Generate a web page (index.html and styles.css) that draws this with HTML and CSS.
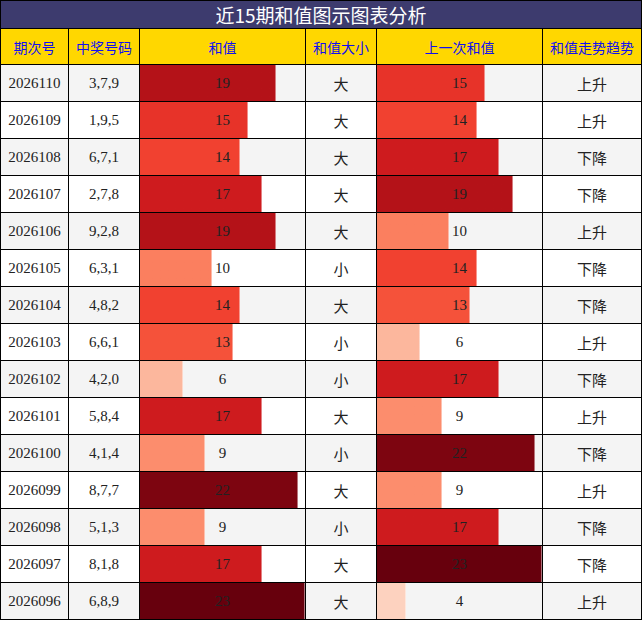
FILE: index.html
```html
<!DOCTYPE html>
<html lang="zh-CN">
<head>
<meta charset="utf-8">
<title>近15期和值图示图表分析</title>
<link rel="stylesheet" href="styles.css">
</head>
<body>
<div class="board">
  <div class="title">近15期和值图示图表分析</div>
  <div class="row head">
    <div class="cell">期次号</div>
    <div class="cell">中奖号码</div>
    <div class="cell">和值</div>
    <div class="cell">和值大小</div>
    <div class="cell">上一次和值</div>
    <div class="cell">和值走势趋势</div>
  </div>
  <div class="row alt">
    <div class="cell num">2026110</div><div class="cell num">3,7,9</div>
    <div class="cell num bar" style="--w:82.61%;--c:#b41218">19</div>
    <div class="cell cjk">大</div>
    <div class="cell num bar" style="--w:65.22%;--c:#e73329">15</div>
    <div class="cell cjk">上升</div>
  </div>
  <div class="row">
    <div class="cell num">2026109</div><div class="cell num">1,9,5</div>
    <div class="cell num bar" style="--w:65.22%;--c:#e73329">15</div>
    <div class="cell cjk">大</div>
    <div class="cell num bar" style="--w:60.87%;--c:#f14130">14</div>
    <div class="cell cjk">上升</div>
  </div>
  <div class="row alt">
    <div class="cell num">2026108</div><div class="cell num">6,7,1</div>
    <div class="cell num bar" style="--w:60.87%;--c:#f14130">14</div>
    <div class="cell cjk">大</div>
    <div class="cell num bar" style="--w:73.91%;--c:#ce1b1e">17</div>
    <div class="cell cjk">下降</div>
  </div>
  <div class="row">
    <div class="cell num">2026107</div><div class="cell num">2,7,8</div>
    <div class="cell num bar" style="--w:73.91%;--c:#ce1b1e">17</div>
    <div class="cell cjk">大</div>
    <div class="cell num bar" style="--w:82.61%;--c:#b41218">19</div>
    <div class="cell cjk">下降</div>
  </div>
  <div class="row alt">
    <div class="cell num">2026106</div><div class="cell num">9,2,8</div>
    <div class="cell num bar" style="--w:82.61%;--c:#b41218">19</div>
    <div class="cell cjk">大</div>
    <div class="cell num bar" style="--w:43.48%;--c:#fb7f5f">10</div>
    <div class="cell cjk">上升</div>
  </div>
  <div class="row">
    <div class="cell num">2026105</div><div class="cell num">6,3,1</div>
    <div class="cell num bar" style="--w:43.48%;--c:#fb7f5f">10</div>
    <div class="cell cjk">小</div>
    <div class="cell num bar" style="--w:60.87%;--c:#f14130">14</div>
    <div class="cell cjk">下降</div>
  </div>
  <div class="row alt">
    <div class="cell num">2026104</div><div class="cell num">4,8,2</div>
    <div class="cell num bar" style="--w:60.87%;--c:#f14130">14</div>
    <div class="cell cjk">大</div>
    <div class="cell num bar" style="--w:56.52%;--c:#f5523a">13</div>
    <div class="cell cjk">下降</div>
  </div>
  <div class="row">
    <div class="cell num">2026103</div><div class="cell num">6,6,1</div>
    <div class="cell num bar" style="--w:56.52%;--c:#f5523a">13</div>
    <div class="cell cjk">小</div>
    <div class="cell num bar" style="--w:26.09%;--c:#fcb79d">6</div>
    <div class="cell cjk">上升</div>
  </div>
  <div class="row alt">
    <div class="cell num">2026102</div><div class="cell num">4,2,0</div>
    <div class="cell num bar" style="--w:26.09%;--c:#fcb79d">6</div>
    <div class="cell cjk">小</div>
    <div class="cell num bar" style="--w:73.91%;--c:#ce1b1e">17</div>
    <div class="cell cjk">下降</div>
  </div>
  <div class="row">
    <div class="cell num">2026101</div><div class="cell num">5,8,4</div>
    <div class="cell num bar" style="--w:73.91%;--c:#ce1b1e">17</div>
    <div class="cell cjk">大</div>
    <div class="cell num bar" style="--w:39.13%;--c:#fc8d6d">9</div>
    <div class="cell cjk">上升</div>
  </div>
  <div class="row alt">
    <div class="cell num">2026100</div><div class="cell num">4,1,4</div>
    <div class="cell num bar" style="--w:39.13%;--c:#fc8d6d">9</div>
    <div class="cell cjk">小</div>
    <div class="cell num bar" style="--w:95.65%;--c:#7d0510">22</div>
    <div class="cell cjk">下降</div>
  </div>
  <div class="row">
    <div class="cell num">2026099</div><div class="cell num">8,7,7</div>
    <div class="cell num bar" style="--w:95.65%;--c:#7d0510">22</div>
    <div class="cell cjk">大</div>
    <div class="cell num bar" style="--w:39.13%;--c:#fc8d6d">9</div>
    <div class="cell cjk">上升</div>
  </div>
  <div class="row alt">
    <div class="cell num">2026098</div><div class="cell num">5,1,3</div>
    <div class="cell num bar" style="--w:39.13%;--c:#fc8d6d">9</div>
    <div class="cell cjk">小</div>
    <div class="cell num bar" style="--w:73.91%;--c:#ce1b1e">17</div>
    <div class="cell cjk">下降</div>
  </div>
  <div class="row">
    <div class="cell num">2026097</div><div class="cell num">8,1,8</div>
    <div class="cell num bar" style="--w:73.91%;--c:#ce1b1e">17</div>
    <div class="cell cjk">大</div>
    <div class="cell num bar" style="--w:100%;--c:#67000d">23</div>
    <div class="cell cjk">下降</div>
  </div>
  <div class="row alt">
    <div class="cell num">2026096</div><div class="cell num">6,8,9</div>
    <div class="cell num bar" style="--w:100%;--c:#67000d">23</div>
    <div class="cell cjk">大</div>
    <div class="cell num bar" style="--w:17.39%;--c:#fdd2bf">4</div>
    <div class="cell cjk">上升</div>
  </div>
</div>
</body>
</html>
```
FILE: styles.css
```css
html, body {
  margin: 0;
  padding: 0;
  background: #ffffff;
}

.board {
  width: 642px;
  box-sizing: border-box;
  padding: 1px;
  background: #000000;
  display: grid;
  grid-template-columns: 67px 70px 165px 70px 165px 98px;
  grid-template-rows: 27px 35px repeat(15, 36px);
  gap: 1px;
}

.title {
  grid-column: 1 / -1;
  background: #3d3b6e;
  color: #ffffff;
  font-family: "Noto Sans CJK SC", "Noto Sans", sans-serif;
  font-size: 19px;
  line-height: 27px;
  text-align: center;
}

.row {
  display: contents;
}

.cell {
  display: flex;
  align-items: center;
  justify-content: center;
  background-color: #ffffff;
  color: #222222;
  white-space: nowrap;
}

.row.alt .cell {
  background-color: #f4f4f4;
}

.row.head .cell {
  background-color: #ffd700;
  color: #1010f0;
  font-family: "Noto Sans CJK SC", sans-serif;
  font-size: 14px;
}

.num {
  font-family: "Liberation Serif", "Noto Sans CJK SC", serif;
  font-size: 15px;
}

.cjk {
  font-family: "Noto Sans CJK SC", sans-serif;
  font-size: 15px;
}

.bar {
  background-image: linear-gradient(90deg,
    var(--c) calc(var(--w) - 1px),
    color-mix(in srgb, var(--c) 55%, #ffffff) calc(var(--w) - 1px),
    color-mix(in srgb, var(--c) 55%, #ffffff) var(--w),
    transparent var(--w));
}
```
